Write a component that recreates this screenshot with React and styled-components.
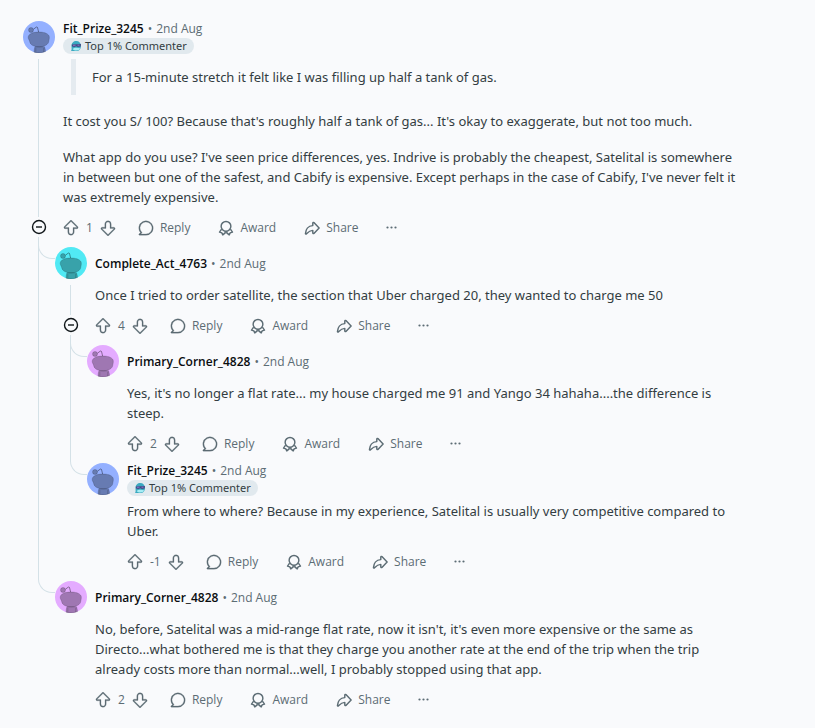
import React from "react";
import styled, { createGlobalStyle } from "styled-components";

const GlobalStyle = createGlobalStyle`
  * {
    box-sizing: border-box;
  }

  body {
    margin: 0;
    background: #f9fafc;
    color: #333d42;
    font-family: "Noto Sans", "Open Sans", sans-serif;
    font-size: 13px;
    line-height: 20px;
  }
`;

const Page = styled.main`
  max-width: 960px;
  padding: 21px 72px 13px 23px;
`;

const Article = styled.article`
  flex: 1;
  min-width: 0;
`;

const Row = styled.div`
  display: flex;
  gap: 8px;
`;

const Gutter = styled.div`
  width: 32px;
  flex: none;
  display: flex;
  flex-direction: column;
  align-items: center;
  padding-top: ${(props) => (props.$spaced ? "6px" : "0")};
`;

const Line = styled.div`
  flex: 1;
  width: 1px;
  margin-right: 1px;
  background: ${(props) => (props.$visible ? "#d4e1e7" : "transparent")};
`;

const Avatar = styled.svg`
  width: 32px;
  height: 32px;
  flex: none;
  display: block;
`;

const Header = styled.header`
  display: flex;
  flex-direction: column;
  justify-content: center;
  align-items: flex-start;
  height: 32px;
  padding-top: 1px;
  gap: 1px;
`;

const Byline = styled.div`
  display: flex;
  gap: 4px;
  font-family: "Open Sans", sans-serif;
  font-size: 12px;
  line-height: 16px;
  color: #5c6c74;
`;

const Author = styled.a`
  color: #0a0d0f;
  font-weight: 600;
  text-decoration: none;
`;

const Badge = styled.span`
  display: flex;
  align-items: center;
  gap: 3px;
  height: 16px;
  padding: 0 7px;
  border-radius: 8px;
  background: #e1e9ee;
  color: #333d42;
  font-size: 11px;
  line-height: 16px;

  svg {
    width: 12px;
    height: 12px;
  }
`;

const Body = styled.div`
  flex: 1;
  min-width: 0;
  padding: 6px 0 4px;

  p {
    margin: 0;
  }

  p + p,
  blockquote + p {
    margin-top: 16px;
  }
`;

const Quote = styled.blockquote`
  margin: 0 0 0 8px;
  padding: 8px 16px;
  border-left: 5px solid #e5ebf0;
`;

const Actions = styled.div`
  display: flex;
  align-items: center;
  gap: 28px;
  height: 32px;
  padding-top: 1px;
  font-family: "Open Sans", sans-serif;
`;

const Votes = styled.div`
  display: flex;
  align-items: center;
  gap: 7px;
  margin-right: -6px;
  color: #5c6c74;
  font-size: 12px;
`;

const ActionButton = styled.button`
  display: flex;
  align-items: center;
  gap: 6px;
  padding: 0;
  border: 0;
  background: none;
  color: #5c6c74;
  font-family: inherit;
  font-size: 12px;
  line-height: 16px;
  cursor: pointer;

  svg {
    width: 16px;
    height: 16px;
    display: block;
  }
`;

const CollapseButton = styled(ActionButton)`
  height: 20px;
  color: #0f1518;
`;

const Replies = styled.ul`
  list-style: none;
  margin: 0;
  padding: 0 0 0 15px;
`;

const ReplyItem = styled.li`
  display: flex;

  > article {
    padding-top: 4px;
  }
`;

const Rail = styled.div`
  width: 17px;
  flex: none;
  border-left: 1px solid ${(props) => (props.$last ? "transparent" : "#d4e1e7")};
`;

const Elbow = styled.div`
  height: 16px;
  margin-left: -1px;
  border: solid #d4e1e7;
  border-width: 0 0 1px 1px;
  border-bottom-left-radius: 14px;
`;

const UpIcon = () => (
  <svg viewBox="0 0 20 20" fill="currentColor" stroke="currentColor" strokeWidth=".3" aria-hidden="true">
    <path d="M10 19c-.072 0-.145 0-.218-.006A4.1 4.1 0 0 1 6 14.816V11H2.862a1.751 1.751 0 0 1-1.234-2.993L9.41.28a.836.836 0 0 1 1.18 0l7.782 7.727A1.751 1.751 0 0 1 17.139 11H14v3.882a4.134 4.134 0 0 1-.854 2.592A3.99 3.99 0 0 1 10 19Zm0-17.193L2.685 9.071a.251.251 0 0 0 .177.429H7.5v5.316A2.63 2.63 0 0 0 9.864 17.5a2.441 2.441 0 0 0 1.856-.682A2.478 2.478 0 0 0 12.5 15V9.5h4.639a.25.25 0 0 0 .176-.429L10 1.807Z" />
  </svg>
);

const DownIcon = () => (
  <svg viewBox="0 0 20 20" fill="currentColor" stroke="currentColor" strokeWidth=".3" aria-hidden="true">
    <path
      transform="rotate(180 10 10)"
      d="M10 19c-.072 0-.145 0-.218-.006A4.1 4.1 0 0 1 6 14.816V11H2.862a1.751 1.751 0 0 1-1.234-2.993L9.41.28a.836.836 0 0 1 1.18 0l7.782 7.727A1.751 1.751 0 0 1 17.139 11H14v3.882a4.134 4.134 0 0 1-.854 2.592A3.99 3.99 0 0 1 10 19Zm0-17.193L2.685 9.071a.251.251 0 0 0 .177.429H7.5v5.316A2.63 2.63 0 0 0 9.864 17.5a2.441 2.441 0 0 0 1.856-.682A2.478 2.478 0 0 0 12.5 15V9.5h4.639a.25.25 0 0 0 .176-.429L10 1.807Z"
    />
  </svg>
);

const CommentIcon = () => (
  <svg viewBox="0 0 20 20" fill="currentColor" stroke="currentColor" strokeWidth=".3" aria-hidden="true">
    <path d="M10 19H1.871a.886.886 0 0 1-.798-.52.886.886 0 0 1 .158-.941L3.1 15.771A9 9 0 1 1 10 19Zm-6.549-1.5H10a7.5 7.5 0 1 0-5.323-2.219l.54.545L3.451 17.5Z" />
  </svg>
);

const AwardIcon = () => (
  <svg
    viewBox="0 0 20 20"
    fill="none"
    stroke="currentColor"
    strokeWidth="1.8"
    strokeLinejoin="round"
    aria-hidden="true"
  >
    <circle cx="10" cy="7.900" r="6.100" />
    <path d="M4.500 11.500 1.900 15.200l2.900.9 1.200 2.500 3-2.500V14M15.500 11.500l2.600 3.700-2.900.9-1.200 2.500-3-2.500V14" />
  </svg>
);

const ShareIcon = () => (
  <svg
    viewBox="0 0 20 20"
    fill="none"
    stroke="currentColor"
    strokeWidth="1.8"
    strokeLinejoin="round"
    aria-hidden="true"
  >
    <path d="M11 7V3.800c0-.8.9-1.100 1.400-.6l6.500 6.800-6.500 6.800c-.5.5-1.400.2-1.400-.6V13c-4 .1-6 2.300-8 4.400-.5.5-1.200.2-1.200-.4C2.100 12 5 7.200 11 7Z" />
  </svg>
);

const DotsIcon = () => (
  <svg viewBox="0 0 16 16" fill="currentColor" aria-hidden="true">
    <circle cx="1.500" cy="7.500" r="1.100" />
    <circle cx="5.500" cy="7.500" r="1.100" />
    <circle cx="9.500" cy="7.500" r="1.100" />
  </svg>
);

const CollapseIcon = () => (
  <svg
    viewBox="0 0 16 16"
    fill="none"
    stroke="currentColor"
    strokeWidth="1.4"
    aria-hidden="true"
  >
    <circle cx="8" cy="8" r="6.5" />
    <path d="M5 8h6" />
  </svg>
);

const BadgeIcon = () => (
  <svg viewBox="0 0 12 12" aria-hidden="true">
    <path d="M1 11c1-1 .5-3 .5-5C1.500 3 3.500 1 6.300 1S11 3 11 6s-1.800 5-4.500 5Z" fill="#3aa9c0" />
    <path d="M2.500 9C4 7.500 8 7.500 10.300 8.500 9.500 10.500 5 11.500 2.500 9Z" fill="#a5ecf4" />
    <path d="M1.800 4.500 11 4l-.3 2.500-3 .5-1.500-.8-1.700.8-2.500-.6Z" fill="#454a85" />
    <path d="M3 5.300h2.500M7.500 5.200h2" stroke="#8a73c9" strokeWidth="1" />
  </svg>
);

const UserAvatar = ({ color }) => (
  <Avatar viewBox="0 0 32 32" aria-hidden="true">
    <circle cx="16" cy="16" r="16" fill={color} />
    <g fill="#000" fillOpacity=".3" stroke="#000" strokeOpacity=".2" strokeWidth=".8">
      <path d="M11 31.200c0-1.800.3-3.600.9-5.400h9.600c.7 1.800 1 3.600 1 4.800A16 16 0 0 1 11 31.200Z" />
      <path d="M12.800 27v4.500M20.700 27v4.200" fill="none" />
      <path d="M5.200 16.400C5.300 13 9.500 11 16 11s10 2.300 10.300 4.700c.3 1.700-.3 2.900-.5 4.500-.4 3.500-4.500 5.600-9.600 5.600-5.200 0-8.900-1.900-9.500-5.100-.2-1.500-1.500-2.700-1.500-4.300Z" />
      <circle cx="8" cy="9" r="2.500" />
      <path d="M10.500 8.200 13 6.300c.8-.6 1.400-.3 1.600.5l1 4.200" fill="none" strokeOpacity=".4" strokeWidth="1" />
    </g>
  </Avatar>
);

const Comment = ({ comment }) => {
  const { author, color, badge, score, quote, paragraphs, replies = [] } = comment;
  const hasReplies = replies.length > 0;

  return (
    <Article>
      <Row>
        <UserAvatar color={color} />
        <Header>
          <Byline>
            <Author href="#">{author}</Author>
            <span>•</span>
            <time>2nd Aug</time>
          </Byline>
          {badge && (
            <Badge>
              <BadgeIcon />
              {badge}
            </Badge>
          )}
        </Header>
      </Row>
      <Row>
        <Gutter $spaced>
          <Line $visible={hasReplies} />
        </Gutter>
        <Body>
          {quote && (
            <Quote>
              <p>{quote}</p>
            </Quote>
          )}
          {paragraphs.map((text) => (
            <p key={text}>{text}</p>
          ))}
        </Body>
      </Row>
      <Row>
        <Gutter>
          {hasReplies && (
            <>
              <Line $visible />
              <CollapseButton aria-label="Collapse thread">
                <CollapseIcon />
              </CollapseButton>
              <Line $visible />
            </>
          )}
        </Gutter>
        <Actions>
          <Votes>
            <ActionButton aria-label="Upvote">
              <UpIcon />
            </ActionButton>
            <span>{score}</span>
            <ActionButton aria-label="Downvote">
              <DownIcon />
            </ActionButton>
          </Votes>
          <ActionButton>
            <CommentIcon />
            Reply
          </ActionButton>
          <ActionButton>
            <AwardIcon />
            Award
          </ActionButton>
          <ActionButton>
            <ShareIcon />
            Share
          </ActionButton>
          <ActionButton aria-label="More options">
            <DotsIcon />
          </ActionButton>
        </Actions>
      </Row>
      {hasReplies && (
        <Replies>
          {replies.map((reply, index) => (
            <ReplyItem key={index}>
              <Rail $last={index === replies.length - 1}>
                <Elbow />
              </Rail>
              <Comment comment={reply} />
            </ReplyItem>
          ))}
        </Replies>
      )}
    </Article>
  );
};

const thread = {
  author: "Fit_Prize_3245",
  color: "#94b0ff",
  badge: "Top 1% Commenter",
  score: 1,
  quote: "For a 15-minute stretch it felt like I was filling up half a tank of gas.",
  paragraphs: [
    "It cost you S/ 100? Because that's roughly half a tank of gas... It's okay to exaggerate, but not too much.",
    "What app do you use? I've seen price differences, yes. Indrive is probably the cheapest, Satelital is somewhere in between but one of the safest, and Cabify is expensive. Except perhaps in the case of Cabify, I've never felt it was extremely expensive.",
  ],
  replies: [
    {
      author: "Complete_Act_4763",
      color: "#51e9f4",
      score: 4,
      paragraphs: [
        "Once I tried to order satellite, the section that Uber charged 20, they wanted to charge me 50",
      ],
      replies: [
        {
          author: "Primary_Corner_4828",
          color: "#e4abff",
          score: 2,
          paragraphs: [
            "Yes, it's no longer a flat rate... my house charged me 91 and Yango 34 hahaha....the difference is steep.",
          ],
        },
        {
          author: "Fit_Prize_3245",
          color: "#94b0ff",
          badge: "Top 1% Commenter",
          score: -1,
          paragraphs: [
            "From where to where? Because in my experience, Satelital is usually very competitive compared to Uber.",
          ],
        },
      ],
    },
    {
      author: "Primary_Corner_4828",
      color: "#e4abff",
      score: 2,
      paragraphs: [
        "No, before, Satelital was a mid-range flat rate, now it isn't, it's even more expensive or the same as Directo...what bothered me is that they charge you another rate at the end of the trip when the trip already costs more than normal...well, I probably stopped using that app.",
      ],
    },
  ],
};

const App = () => (
  <>
    <GlobalStyle />
    <Page>
      <Comment comment={thread} />
    </Page>
  </>
);

export default App;
